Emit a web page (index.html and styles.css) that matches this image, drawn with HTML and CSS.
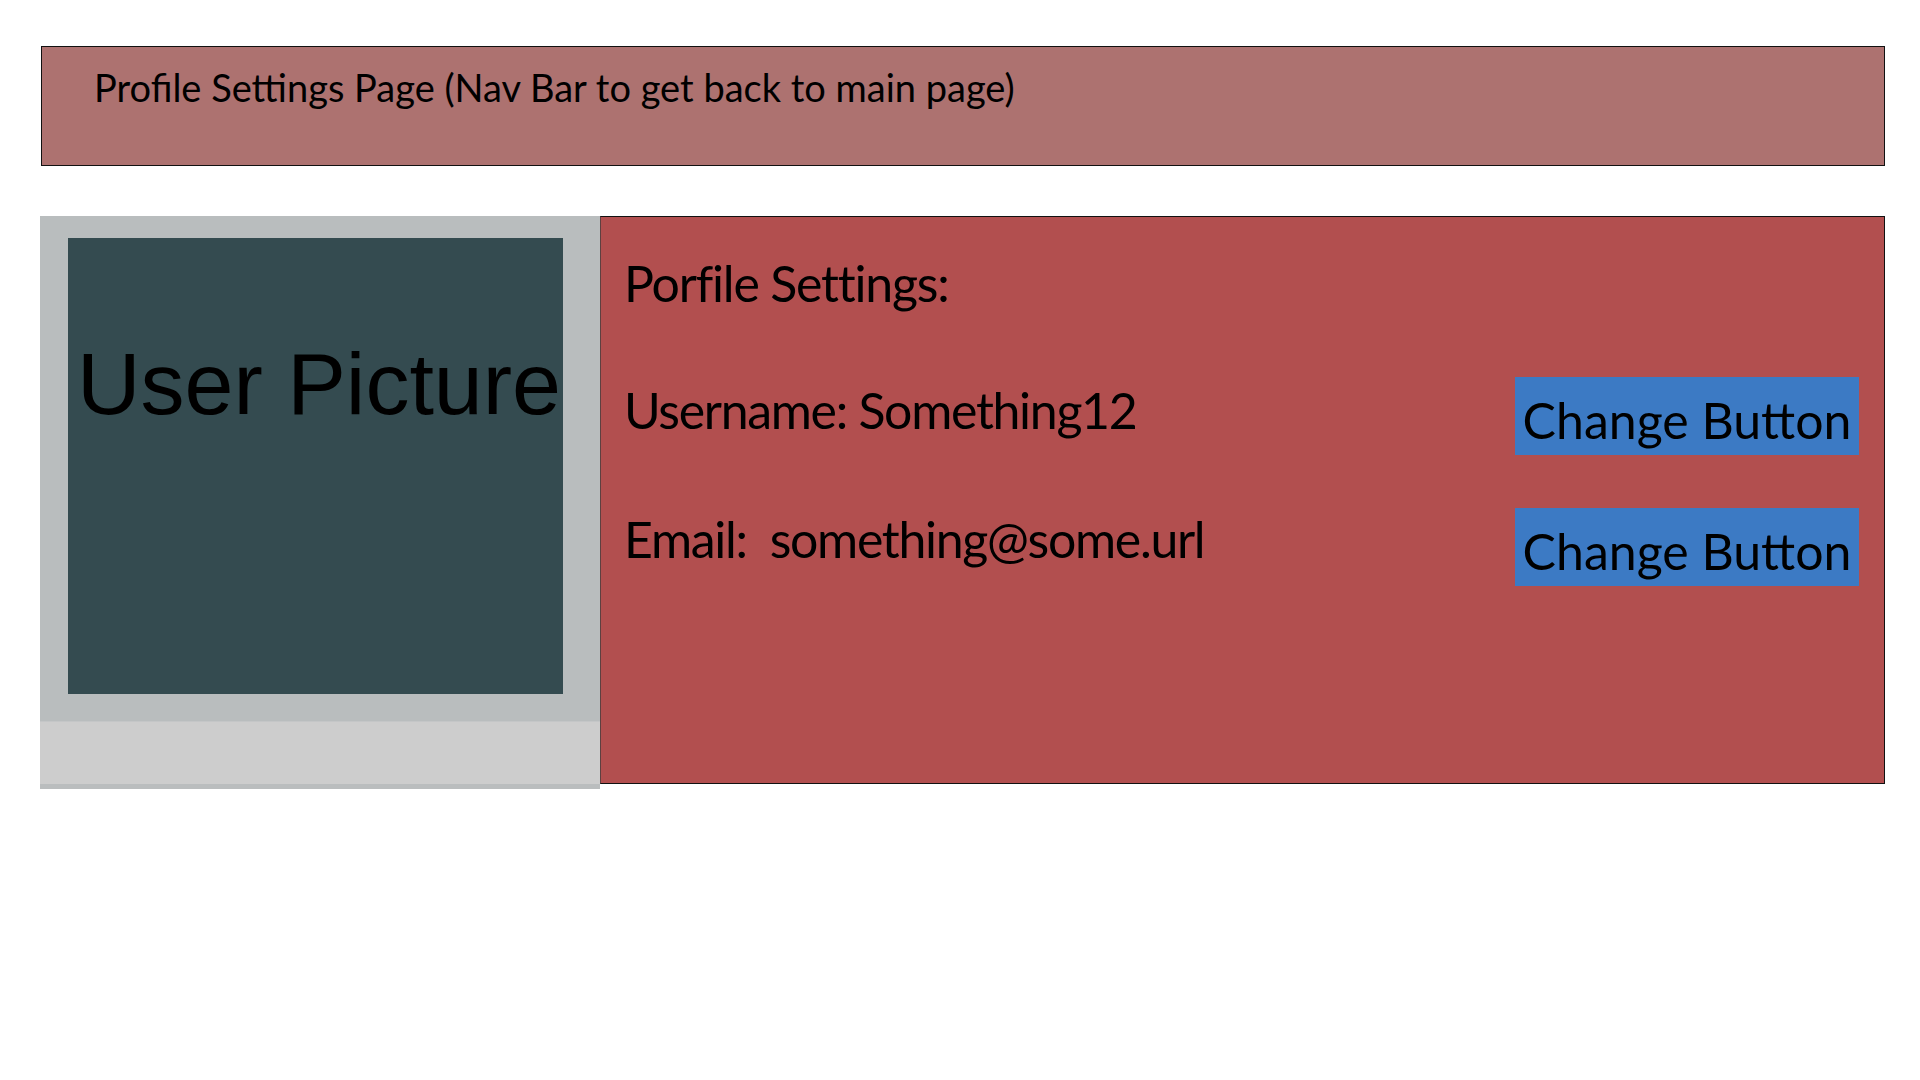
FILE: index.html
```html
<!DOCTYPE html>
<html lang="en">
<head>
<meta charset="utf-8">
<title>Profile Settings</title>
<link rel="stylesheet" href="styles.css">
</head>
<body>
  <header class="nav">
    <span class="nav-title">Profile Settings Page (Nav Bar to get back to main page)</span>
  </header>
  <main class="main">
    <aside class="picture-panel">
      <div class="picture-frame">
        <div class="picture">User Picture</div>
      </div>
      <div class="picture-strip"></div>
      <div class="picture-edge"></div>
    </aside>
    <section class="settings">
      <h1 class="settings-title">Porfile Settings:</h1>
      <div class="row">
        <span class="label">Username: Something12</span>
        <button class="change-btn" type="button">Change Button</button>
      </div>
      <div class="row row-email">
        <span class="label label-email">Email:&nbsp; something@some.url</span>
        <button class="change-btn" type="button">Change Button</button>
      </div>
    </section>
  </main>
</body>
</html>
```
FILE: styles.css
```css
* { box-sizing: border-box; }

html, body {
  margin: 0;
  padding: 0;
  background: #ffffff;
}

body {
  font-family: Lato, "Open Sans", "Noto Sans", sans-serif;
  color: #000;
}

.nav {
  margin: 46px 0 0 41px;
  width: 1844px;
  height: 120px;
  background: #ad7270;
  border: 1px solid #111;
  padding: 17px 0 0 52px;
}

.nav-title {
  display: block;
  font-size: 38px;
  line-height: 46px;
}

.main {
  display: flex;
  align-items: flex-start;
  margin: 50px 0 0 40px;
}

.picture-panel {
  width: 560px;
  display: flex;
  flex-direction: column;
}

.picture-frame {
  background: #b9bdbe;
  padding: 22px 37px 27px 28px;
}

.picture {
  height: 456px;
  background: #344b50;
  font-family: "Liberation Sans", Arial, sans-serif;
  font-size: 88px;
  line-height: 100px;
  padding: 96px 0 0 7px;
  text-align: center;
  white-space: nowrap;
  overflow: hidden;
}

.picture-strip {
  height: 63px;
  background: #cdcdcd;
  border-top: 1px solid #c4c6c7;
}

.picture-edge {
  height: 5px;
  background: #babdbe;
}

.settings {
  width: 1285px;
  height: 568px;
  background: #b24f4f;
  border: 1px solid #111;
  border-left-color: #5e4040;
  padding: 36px 25px 0 23px;
}

.settings-title {
  margin: 0;
  font-weight: 400;
  font-size: 50px;
  line-height: 60px;
  letter-spacing: -1.2px;
}

.row {
  display: flex;
  justify-content: space-between;
  align-items: flex-start;
  margin-top: 64px;
}

.row-email {
  margin-top: 53px;
}

.label {
  font-size: 50px;
  line-height: 60px;
  margin-top: 3px;
  letter-spacing: -1.3px;
  white-space: pre;
}

.label-email {
  margin-top: 1px;
}

.change-btn {
  width: 344px;
  height: 78px;
  margin: 0;
  border: none;
  border-radius: 0;
  background: #3c7ac4;
  color: #000;
  font-family: inherit;
  font-size: 50px;
  line-height: 60px;
  padding: 13px 0 5px;
  text-align: center;
  white-space: nowrap;
}
```
